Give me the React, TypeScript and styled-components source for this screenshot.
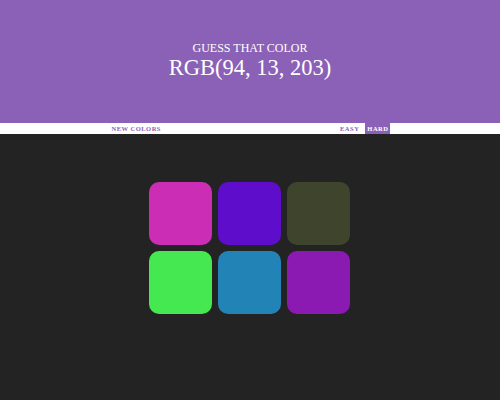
import React from "react";
import styled, { createGlobalStyle } from "styled-components";

const Global = createGlobalStyle`
  html, body { margin: 0; padding: 0; background: #232323; }
  body { font-family: "Liberation Serif", "Times New Roman", serif; }
`;

const PURPLE = "#8b61b7";

const Header = styled.header`
  height: 123px;
  background: ${PURPLE};
  color: #ffffff;
  display: flex;
  flex-direction: column;
  align-items: center;
  justify-content: flex-start;
  padding-top: 41px;
  box-sizing: border-box;
  text-align: center;
`;

const Subtitle = styled.div`
  font-size: 12px;
  line-height: 14px;
  text-transform: uppercase;
`;

const Title = styled.h1`
  margin: 0;
  font-weight: normal;
  font-size: 22.5px;
  line-height: 26px;
`;

const Stripe = styled.nav`
  height: 11px;
  background: #ffffff;
  display: flex;
  justify-content: center;
  align-items: stretch;
`;

const Button = styled.button<{ $active?: boolean }>`
  border: none;
  margin: 0;
  padding: 0 2px;
  background: ${(p) => (p.$active ? PURPLE : "#ffffff")};
  color: ${(p) => (p.$active ? "#ffffff" : PURPLE)};
  font-family: "Liberation Serif", "Times New Roman", serif;
  font-weight: 700;
  font-size: 6.5px;
  letter-spacing: 0.5px;
  text-transform: uppercase;
  line-height: 11px;
  cursor: pointer;
`;

const Message = styled.span`
  display: inline-block;
  width: 175px;
`;

const Modes = styled.div`
  display: flex;
  gap: 4px;
`;

const Board = styled.main`
  display: flex;
  justify-content: center;
  padding-top: 48px;
  padding-right: 1px;
`;

const Grid = styled.div`
  display: grid;
  grid-template-columns: repeat(3, 63px);
  grid-auto-rows: 63px;
  gap: 6px;
`;

const Square = styled.div<{ $color: string }>`
  background: ${(p) => p.$color};
  border-radius: 10px;
`;

const colors = [
  "rgb(203, 45, 181)",
  "rgb(94, 13, 203)",
  "rgb(62, 69, 44)",
  "rgb(70, 232, 82)",
  "rgb(34, 131, 182)",
  "rgb(138, 26, 178)",
];

export default function App() {
  return (
    <>
      <Global />
      <Header>
        <Subtitle>Guess That Color</Subtitle>
        <Title>RGB(94, 13, 203)</Title>
      </Header>
      <Stripe>
        <Button>New Colors</Button>
        <Message />
        <Modes>
          <Button>Easy</Button>
          <Button $active>Hard</Button>
        </Modes>
      </Stripe>
      <Board>
        <Grid>
          {colors.map((c, i) => (
            <Square key={i} $color={c} />
          ))}
        </Grid>
      </Board>
    </>
  );
}
